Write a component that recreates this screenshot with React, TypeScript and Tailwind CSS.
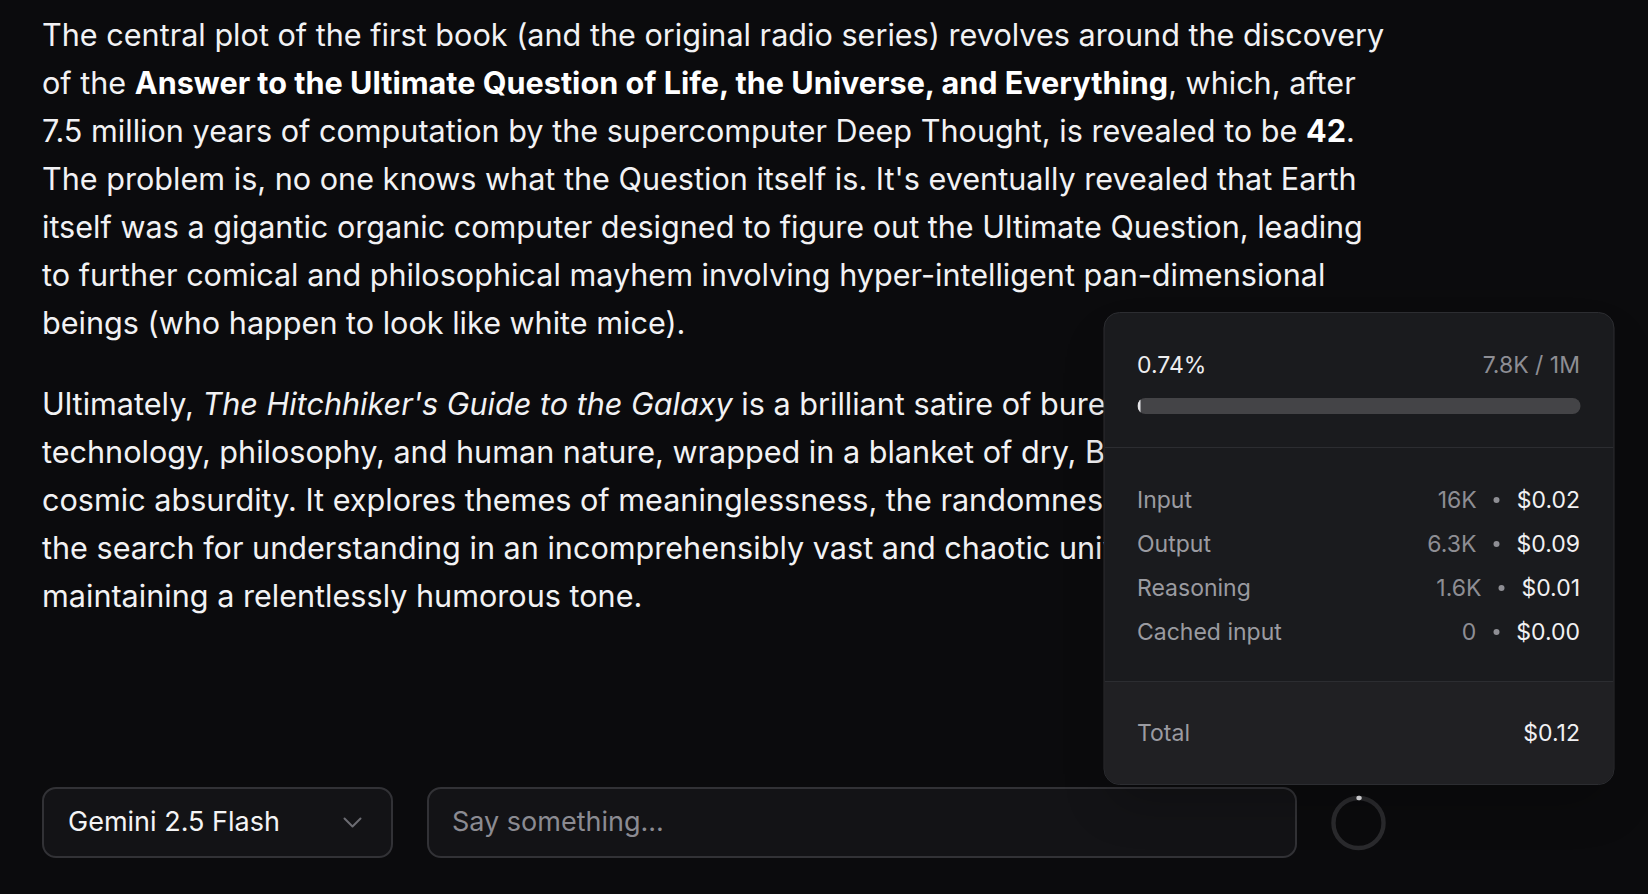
const usageRows = [
  { label: "Input", tokens: "16K", cost: "$0.02" },
  { label: "Output", tokens: "6.3K", cost: "$0.09" },
  { label: "Reasoning", tokens: "1.6K", cost: "$0.01" },
  { label: "Cached input", tokens: "0", cost: "$0.00" },
];

const UsagePopover = () => {
  const percent = 0.74;
  return (
    <div className="absolute bottom-[calc(100%+2px)] left-1/2 z-10 w-[511px] -translate-x-1/2 overflow-hidden rounded-2xl border border-[#2c2d31] bg-[#1a1b1e] text-[23px] leading-[28px] shadow-2xl">
      <div className="flex flex-col gap-[19px] px-[33px] pt-[38px] pb-[33px]">
        <div className="flex items-center justify-between">
          <span className="text-[#ededef]">0.74%</span>
          <span className="text-[#8e8e94]">7.8K / 1M</span>
        </div>
        <div className="h-4 w-full overflow-hidden rounded-full bg-[#444447]">
          <div className="h-full rounded-full bg-[#e4e4e7]" style={{ width: `${percent}%` }} />
        </div>
      </div>
      <div className="border-t border-[#2c2d31] px-[33px] pt-[30px] pb-[27px]">
        {usageRows.map((row) => (
          <div key={row.label} className="flex h-11 items-center justify-between">
            <span className="text-[#9b9ba1]">{row.label}</span>
            <span className="flex items-center gap-[17px]">
              <span className="text-[#8e8e94]">{row.tokens}</span>
              <span className="h-[6px] w-[6px] rounded-full bg-[#8e8e94]" />
              <span className="text-[#f1f1f3]">{row.cost}</span>
            </span>
          </div>
        ))}
      </div>
      <div className="flex h-[103px] items-center justify-between border-t border-[#2c2d31] bg-[#202023] px-[33px]">
        <span className="text-[#9b9ba1]">Total</span>
        <span className="text-[#f1f1f3]">$0.12</span>
      </div>
    </div>
  );
};

const ContextRing = () => (
  <div className="relative flex h-full w-[55px] items-center justify-center">
    <svg width="56" height="56" viewBox="0 0 56 56">
      <circle cx="28" cy="28" r="25.5" fill="none" stroke="#2a2a2d" strokeWidth="4.5" />
      <circle
        cx="28"
        cy="28"
        r="25.5"
        fill="none"
        stroke="#e4e4e7"
        strokeWidth="4.5"
        strokeLinecap="round"
        strokeDasharray="1.2 200"
        transform="rotate(-90 28 28)"
      />
    </svg>
    <UsagePopover />
  </div>
);

export default function App() {
  return (
    <div
      className="flex h-[894px] w-full flex-col overflow-hidden bg-[#0b0b0d] text-[#f2f2f4]"
      style={{ fontFamily: "Inter, 'Noto Sans', sans-serif" }}
    >
      <div className="flex-1 overflow-hidden pl-[42px] pt-[11px]">
        <div className="w-[1344px] text-[30.6px] leading-[48px]">
          <p className="mb-[33px]">
            The central plot of the first book (and the original radio series) revolves around the discovery of
            the <strong className="font-bold text-white">Answer to the Ultimate Question of Life, the Universe, and Everything</strong>,
            which, after 7.5 million years of computation by the supercomputer Deep Thought, is revealed to
            be <strong className="font-bold text-white">42</strong>. The problem is, no one knows what the
            Question itself is. It's eventually revealed that Earth itself was a gigantic organic computer designed to
            figure out the Ultimate Question, leading to further comical and philosophical mayhem involving
            hyper-intelligent pan-dimensional beings (who happen to look like white mice).
          </p>
          <p>
            Ultimately, <em>The Hitchhiker's Guide to the Galaxy</em> is a brilliant satire of bureaucracy,
            technology, philosophy, and human nature, wrapped in a blanket of dry, British wit and cosmic absurdity.
            It explores themes of meaninglessness, the randomness of existence, and the search for understanding in
            an incomprehensibly vast and chaotic universe, all while maintaining a relentlessly humorous tone.
          </p>
        </div>
      </div>

      <div className="mb-[36px] flex h-[71px] items-stretch gap-[34px] pl-[42px]">
        <button className="flex w-[351px] items-center justify-between rounded-[14px] border-2 border-[#323236] bg-[#131316] pl-[24px] pr-[29px] text-[27px] text-[#f4f4f5]">
          <span>Gemini 2.5 Flash</span>
          <svg width="19" height="11" viewBox="0 0 19 11" fill="none">
            <path d="M1.5 1.5 L9.5 9.5 L17.5 1.5" stroke="#6c6c72" strokeWidth="2" strokeLinecap="round" strokeLinejoin="round" />
          </svg>
        </button>
        <div className="flex w-[870px] items-center rounded-[14px] border-2 border-[#323236] bg-[#131316] pl-[23px]">
          <input
            className="w-full bg-transparent text-[27px] text-[#f4f4f5] placeholder-[#8b8b92] outline-none"
            placeholder="Say something..."
          />
        </div>
        <ContextRing />
      </div>
    </div>
  );
}
